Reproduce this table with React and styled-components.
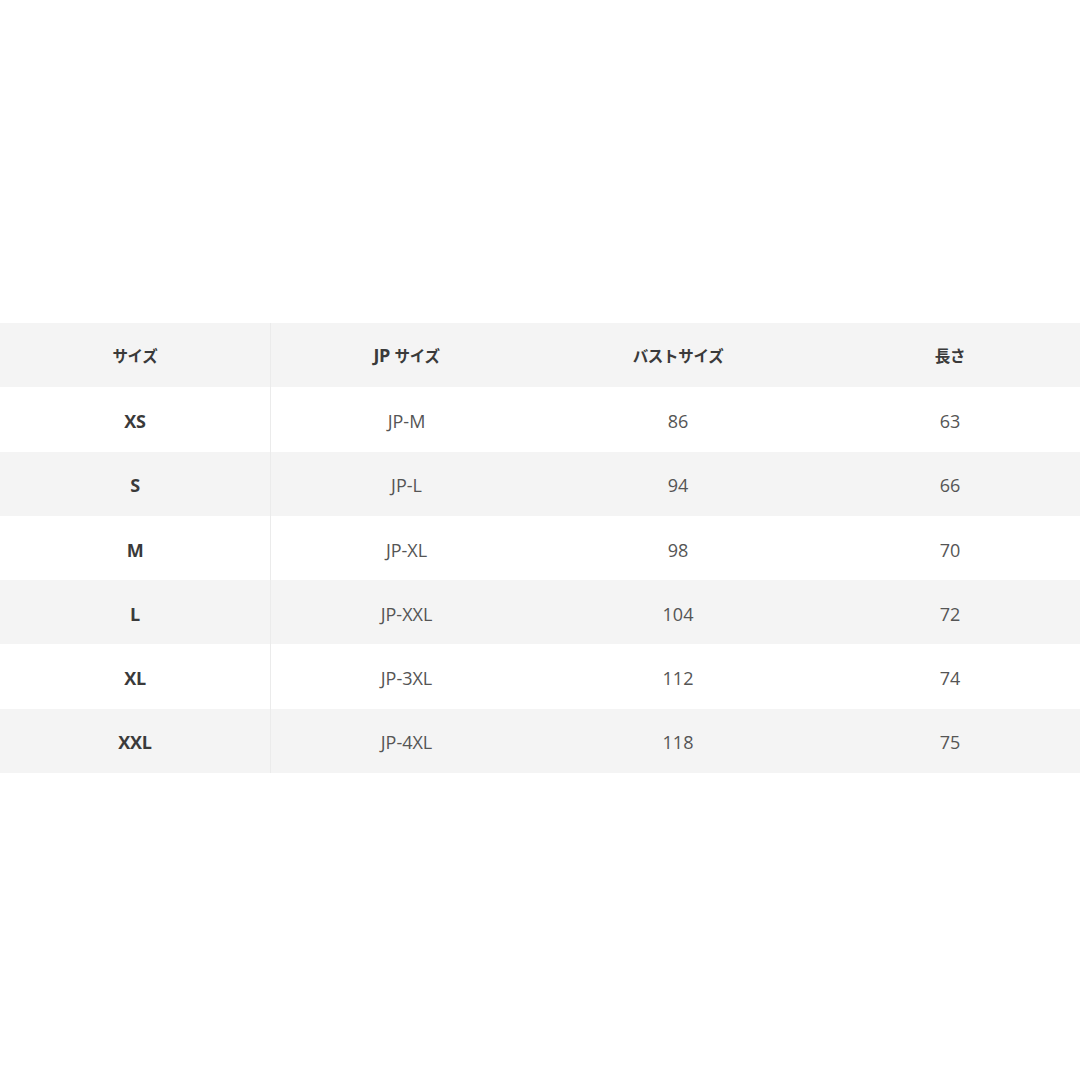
import React from "react";
import styled, { createGlobalStyle } from "styled-components";

const Global = createGlobalStyle`
  html, body { margin: 0; padding: 0; background: #fff; }
  body { font-family: "Open Sans", "Noto Sans CJK JP", sans-serif; }
`;

const Page = styled.div`
  width: 1080px;
  height: 1080px;
  overflow: hidden;
  display: flex;
  flex-direction: column;
  padding-top: 323px;
  box-sizing: border-box;
`;

const Table = styled.div`
  width: 1086px;
  display: flex;
  flex-direction: column;
`;

const Row = styled.div`
  display: grid;
  grid-template-columns: 271px 271px 272px 272px;
  height: 64.3px;
  background: ${(p) => (p.$shaded ? "#f4f4f4" : "#ffffff")};
`;

const Cell = styled.div`
  display: flex;
  align-items: center;
  justify-content: center;
  box-sizing: border-box;
  padding-top: ${(p) => (p.$head ? "0" : "3px")};
  font-size: 18px;
  font-family: "Open Sans", "Noto Sans CJK JP", sans-serif;
  font-weight: ${(p) => (p.$bold ? 700 : 400)};
  color: ${(p) => (p.$bold ? "#3a3a3a" : "#555")};
  border-right: ${(p) => (p.$divider ? "1px solid #ebebeb" : "none")};
  letter-spacing: ${(p) => (p.$bold ? "-0.3px" : "0")};
  white-space: pre;
`;

const Jp = styled.span`
  font-family: "Noto Sans CJK JP", sans-serif;
  font-size: 15.5px;
  font-weight: 700;
  letter-spacing: -0.3px;
`;

const header = [
  [null, "サイズ"],
  ["JP ", "サイズ"],
  [null, "バストサイズ"],
  [null, "長さ"],
];
const rows = [
  ["XS", "JP-M", "86", "63"],
  ["S", "JP-L", "94", "66"],
  ["M", "JP-XL", "98", "70"],
  ["L", "JP-XXL", "104", "72"],
  ["XL", "JP-3XL", "112", "74"],
  ["XXL", "JP-4XL", "118", "75"],
];

export default function App() {
  return (
    <>
      <Global />
      <Page>
        <Table>
          <Row $shaded>
            {header.map(([latin, jp], i) => (
              <Cell key={i} $bold $head $divider={i === 0}>
                {latin}
                <Jp>{jp}</Jp>
              </Cell>
            ))}
          </Row>
          {rows.map((r, ri) => (
            <Row key={ri} $shaded={ri % 2 === 1}>
              {r.map((c, ci) => (
                <Cell key={ci} $bold={ci === 0} $divider={ci === 0}>
                  {c}
                </Cell>
              ))}
            </Row>
          ))}
        </Table>
      </Page>
    </>
  );
}
